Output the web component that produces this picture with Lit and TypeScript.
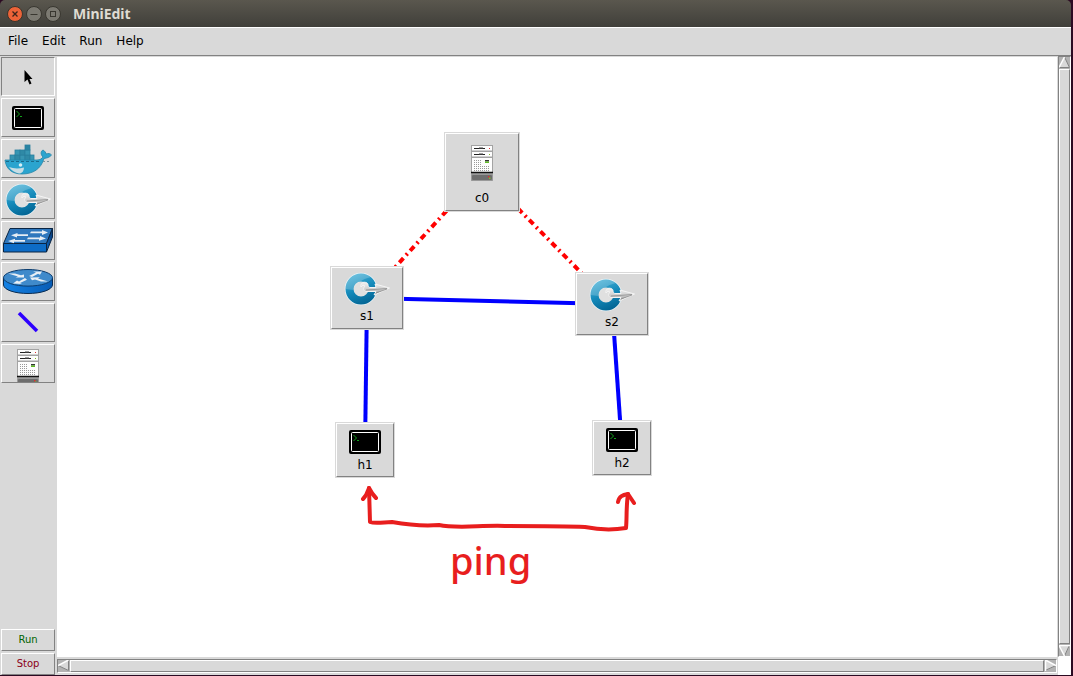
import { LitElement, html, css, svg } from "lit";
import { customElement, property, state } from "lit/decorators.js";

type IconName = "select" | "host" | "docker" | "ovs" | "switch" | "router" | "link" | "controller";

const ICONS: Record<IconName, { w: number; h: number; art: unknown }> = {
  select: {
    w: 10, h: 16,
    art: svg`<path d="M1.500 1V13L4.500 10.500L6.500 15.500L8.500 14.500L6.500 10H9.500Z" fill="#000"/>`,
  },
  host: {
    w: 32, h: 24,
    art: svg`
      <rect width="32" height="24" rx="2" fill="#000"/>
      <rect x="2.500" y="2.500" width="27" height="19" rx="1" fill="#000" stroke="#fff"/>
      <path d="M4.500 5L7.500 8L4.500 11M8 10.500H10" fill="none" stroke="#11a31b"/>`,
  },
  docker: {
    w: 48, h: 32,
    art: svg`
      <g stroke="#2a7f9e" stroke-width=".8">
        <rect x="6" y="12" width="5" height="5.500" fill="#3795b2"/>
        <rect x="11" y="12" width="5" height="5.500" fill="#2f89a6"/>
        <rect x="16" y="12" width="5" height="5.500" fill="#3795b2"/>
        <rect x="21" y="12" width="5" height="5.500" fill="#2f89a6"/>
        <rect x="26" y="12" width="4" height="5.500" fill="#3795b2"/>
        <rect x="11" y="7" width="5" height="5" fill="#3795b2"/>
        <rect x="16" y="7" width="5" height="5" fill="#2f89a6"/>
        <rect x="21" y="7" width="5" height="5" fill="#3795b2"/>
        <rect x="21" y="2" width="5" height="5" fill="#2a84a3"/>
      </g>
      <path d="M1 17H33C36 17 38 15.500 39 14C36 11 37 8 39 7C41 8 42 10 42 11C44 10 46.500 10.500 47.500 12C45.500 14.500 43 15 40 15.500C37 26 29 31 18 31C8 31 2 26 1 17Z" fill="#2ba4cf" stroke="#2585a8" stroke-width=".8"/>
      <path d="M5 24C9 25.500 14 26 20 24.500C20 28 18 30 16 30.500C11 30 7 27 5 24Z" fill="#c9dde4"/>
      <path d="M2 18.500H37" stroke="#1a6a8a" stroke-dasharray="3 2"/>
      <path d="M39 18.500H45" stroke="#7a949c" stroke-dasharray="2 2"/>
      <circle cx="16.500" cy="22" r="1.800" fill="#d6f0f7"/>`,
  },
  ovs: {
    w: 46, h: 34,
    art: svg`
      <defs>
        <linearGradient id="ring" gradientUnits="userSpaceOnUse" x1="10" y1="2" x2="22" y2="32">
          <stop offset="0" stop-color="#45b0d6"/><stop offset=".5" stop-color="#1489b9"/><stop offset="1" stop-color="#026493"/>
        </linearGradient>
        <linearGradient id="steel" x1="0" y1="0" x2="0" y2="1">
          <stop offset="0" stop-color="#f2f2f2"/><stop offset=".55" stop-color="#cfcfcf"/><stop offset="1" stop-color="#8c8c8c"/>
        </linearGradient>
      </defs>
      <circle cx="17" cy="17" r="11.500" fill="none" stroke="#edf5f8" stroke-width="9.500"/>
      <circle cx="17" cy="17" r="11.500" fill="#e0e0e0" stroke="url(#ring)" stroke-width="8"/>
      <path d="M1.500 17A15.500 15.500 0 0 1 17 1.500C21 1.500 25 3 27 5C18 7 11 12 9 18Z" fill="#fff" opacity=".2"/>
      <path d="M17 15C16 11 20 9 23 11C25 12 23 15 26 15.500H32L31 12L45.500 16L30 23L32 19.500H23C19 19.500 19 16 21 14C20 13 18 13 17 15Z" fill="url(#steel)" stroke="#f4f4f4"/>
      <path d="M22 18L30 17.500L43 16.500M32 21L43 17" fill="none" stroke="#8d8d8d" stroke-width=".8"/>`,
  },
  switch: {
    w: 50, h: 25,
    art: svg`
      <defs><linearGradient id="side"><stop stop-color="#0b62b8"/><stop offset="1" stop-color="#083c7c"/></linearGradient></defs>
      <path d="M.5 15.500L7 .5H49.500L43.500 15.500Z" fill="#2e77bd" stroke="#0a2543"/>
      <path d="M.5 15.500H43.500V24H.5Z" fill="#0d6cc6" stroke="#0a2543"/>
      <path d="M43.500 15.500L49.500 .5V9L43.500 24Z" fill="url(#side)" stroke="#0a2543"/>
      <g fill="#e6edf4">
        <path d="M28 3.500H39V2L45 4.500L39 7V5.300H27Z"/>
        <path d="M25 6.200V8H14V9.500L8 7.200L14.500 5V6.200Z"/>
        <path d="M25 9.500H37V8L43 10.400L36 12.800V11.200H24Z"/>
        <path d="M22 12V13.800H11V15.200L5 13L12 10.800V12Z"/>
      </g>`,
  },
  router: {
    w: 50, h: 25,
    art: svg`
      <defs><linearGradient id="drum"><stop stop-color="#1583e6"/><stop offset="1" stop-color="#075cb5"/></linearGradient></defs>
      <path d="M.5 9V16C1 21 12 24.500 25 24.500S49 21 49.500 16V9Z" fill="url(#drum)" stroke="#0b2c50"/>
      <ellipse cx="25" cy="8.800" rx="24.500" ry="8.300" fill="#3f8acb" stroke="#0b3c6e"/>
      <g fill="#e9eff5">
        <path d="M5 4.500H12L18 6.200L21 5.500L21 8.500H12.500L15 7.400Z"/>
        <path d="M26 7L33 3.500L30 2.500H39L37 5.800L35 4.700L29 8Z"/>
        <path d="M22 9L24 10.700L17 14L19 15L10 14.500L14 11.500L16 12.500Z"/>
        <path d="M45 12.500H38L32 10.500L29 11.200L27 8.500L37 8.300L35 9.500Z"/>
      </g>`,
  },
  link: {
    w: 22, h: 22,
    art: svg`<path d="M2 1L20 19" stroke="#2d00ff" stroke-width="3.500"/>`,
  },
  controller: {
    w: 22, h: 36,
    art: svg`
      <rect width="22" height="36" fill="#a3a3a3"/>
      <path d="M1 1H21V5.500H1ZM1 7H21V11.500H1ZM1 13H21V27H1Z" fill="#fdfdfd"/>
      <path d="M3 3.500H14M3 9.500H14" stroke="#222" stroke-width="1.200"/>
      <path d="M8 2.800H12M8 8.800H12" stroke="#777"/>
      <rect x="18" y="3" width="1" height="1" fill="#e03030"/><rect x="18" y="9" width="1" height="1" fill="#7fbf20"/>
      <rect x="14" y="15" width="4" height="1.500" fill="#333"/><rect x="14" y="16.500" width="4" height="1.500" fill="#5ebc22"/>
      <path d="M3 15.500H11M3 17.500H11M3 19.500H11M3 21.500H19M3 23.500H19M3 25.500H19" stroke="#999" stroke-dasharray="1 1"/>
      <path d="M0 27.500H22" stroke="#111" stroke-width="1.500"/>
      <rect x=".5" y="29.500" width="21" height="6" rx="1.500" fill="#6d6d6d" stroke="#999"/>
      <rect x="17" y="31" width="1.500" height="1.500" fill="#e03030"/><rect x="18" y="32.500" width="1.500" height="1.500" fill="#7fbf20"/>`,
  },
};

@customElement("net-icon")
class NetIcon extends LitElement {
  @property() name: IconName = "host";
  static styles = css`
    :host { display: block; flex: none; }
    svg { display: block; }
  `;
  render() {
    const { w, h, art } = ICONS[this.name];
    return html`<svg width=${w} height=${h} viewBox="0 0 ${w} ${h}" aria-hidden="true">${art}</svg>`;
  }
}

interface NetNode { id: string; icon: IconName; x: number; y: number; w: number; h: number; }

const TOOLS: { icon: IconName; label: string }[] = [
  { icon: "select", label: "Select" },
  { icon: "host", label: "Host" },
  { icon: "docker", label: "Docker" },
  { icon: "ovs", label: "Switch" },
  { icon: "switch", label: "Legacy switch" },
  { icon: "router", label: "Legacy router" },
  { icon: "link", label: "Link" },
  { icon: "controller", label: "Controller" },
];

const NODES: NetNode[] = [
  { id: "c0", icon: "controller", x: 387, y: 75, w: 76, h: 80 },
  { id: "s1", icon: "ovs", x: 273, y: 209, w: 74, h: 64 },
  { id: "s2", icon: "ovs", x: 518, y: 215, w: 74, h: 64 },
  { id: "h1", icon: "host", x: 278, y: 365, w: 60, h: 56 },
  { id: "h2", icon: "host", x: 535, y: 363, w: 60, h: 56 },
];

const LINKS = [
  { from: "s1", to: "c0", control: true },
  { from: "s2", to: "c0", control: true },
  { from: "s1", to: "s2", control: false },
  { from: "s1", to: "h1", control: false },
  { from: "s2", to: "h2", control: false },
];

@customElement("net-canvas")
class NetCanvas extends LitElement {
  static styles = css`
    :host { display: block; position: relative; overflow: hidden; background: #fff; }
    .links { position: absolute; inset: 0; width: 100%; height: 100%; }
    .wire { stroke: #00f; stroke-width: 4; }
    .control { stroke: #f00; stroke-width: 4; stroke-dasharray: 6 4 2 4; }
    .ink { fill: none; stroke: #e81e1e; stroke-width: 4; stroke-linecap: round; stroke-linejoin: round; }
    .note { position: absolute; left: 393px; top: 477px; font: 500 38px/52px "Noto Sans", sans-serif; color: #e81e1e; }
    .node {
      position: absolute; box-sizing: border-box; display: flex; flex-direction: column;
      align-items: center; justify-content: flex-start; gap: 3px; padding: 6px 0 0;
      color: #000; background: #d9d9d9; font: 12px/16px "DejaVu Sans", sans-serif;
      border: 1px solid; border-color: #fff #828282 #828282 #fff; outline: 1px solid #d9d9d9;
    }
    .c0 { gap: 9px; padding-top: 11px; }
    .s1, .s2 { gap: 2px; padding-top: 4px; }
  `;
  private center(id: string) {
    const n = NODES.find((node) => node.id === id)!;
    return { x: n.x + n.w / 2, y: n.y + n.h / 2 };
  }
  render() {
    return html`
      <svg class="links" aria-hidden="true">
        ${LINKS.map((l) => {
          const a = this.center(l.from);
          const b = this.center(l.to);
          return svg`<line class=${l.control ? "control" : "wire"} x1=${a.x} y1=${a.y} x2=${b.x} y2=${b.y} />`;
        })}
        <path class="ink" d="M312 431L313 465C318 467 328 465 335 465C352 468 369 469 382 468C400 472 424 468 448 469C475 469 508 469 528 470C543 473 557 473 569 471C570 461 569 450 571 437"/>
        <path class="ink" d="M306 442C310 438 311 434 312 431C314 435 316 438 319 441M561 445C562 439 566 438 571 437C573 440 575 443 577 446"/>
      </svg>
      ${NODES.map((n) => html`
        <button class="node ${n.id}" style="left:${n.x + 1}px;top:${n.y + 1}px;width:${n.w - 2}px;height:${n.h - 2}px">
          <net-icon name=${n.icon}></net-icon><span>${n.id}</span>
        </button>`)}
      <span class="note">ping</span>
    `;
  }
}

@customElement("scroll-bar")
class ScrollBar extends LitElement {
  @property({ reflect: true }) orientation: "vertical" | "horizontal" = "vertical";
  static styles = css`
    :host { display: flex; box-sizing: border-box; background: #b3b3b3; border: 1px solid; border-color: #828282 #fff #fff #828282; }
    :host([orientation="vertical"]) { flex-direction: column; }
    .arrow { display: block; flex: none; padding: 0; border: 0; background: none; width: 11px; height: 11px; }
    .arrow svg { display: block; }
    .thumb { flex: 1; margin: 1px 0; background: #d9d9d9; border: 1px solid; border-color: #fff #828282 #828282 #fff; }
    :host([orientation="horizontal"]) .thumb { margin: 0 1px; }
  `;
  private arrow(label: string, shape: string, light: string, dark: string) {
    return html`<button class="arrow" aria-label=${label}>
      <svg width="11" height="11" viewBox="0 0 11 11"><path d=${shape} fill="#d9d9d9"/><path d=${dark} fill="none" stroke="#828282"/><path d=${light} fill="none" stroke="#fff" stroke-width="1.500"/></svg>
    </button>`;
  }
  render() {
    const v = this.orientation === "vertical";
    return html`
      ${v
        ? this.arrow("Scroll up", "M5.500 0L11 11H0Z", "M0 10.500L5.500 0", "M5.500 0L10.500 10.500H0")
        : this.arrow("Scroll left", "M0 5.500L11 0V11Z", "M0 5.500L10.500 0", "M10.500 0V10.500L0 5.500")}
      <div class="thumb"></div>
      ${v
        ? this.arrow("Scroll down", "M0 0H11L5.500 11Z", "M11 .5H0L5.500 11", "M10.500 0L5.500 11")
        : this.arrow("Scroll right", "M0 0L11 5.500L0 11Z", "M.5 11V0L11 5.500", "M0 10.500L11 5.500")}
    `;
  }
}

@customElement("app-root")
class AppRoot extends LitElement {
  @state() private tool: IconName = "select";
  static styles = css`
    :host {
      display: flex; flex-direction: column; box-sizing: border-box; height: 100vh;
      padding: 0 2px 1px 0; background: #2b0a22; font: 12px/16px "DejaVu Sans", sans-serif; color: #000;
    }
    .title {
      display: flex; align-items: center; gap: 3px; flex: none; height: 27px; padding-left: 7px;
      background: linear-gradient(#5a574e, #403f3a); border-radius: 5px 5px 0 0;
    }
    .win { display: block; width: 16px; height: 16px; padding: 0; border: 0; background: none; }
    .win svg { display: block; }
    h1 { margin: 0 0 0 9px; font: bold 14px/20px "Noto Sans", sans-serif; color: #dfdbd2; }
    .menu {
      display: flex; gap: 2px; flex: none; box-sizing: border-box; height: 29px; padding: 0 2px 2px; background: #d9d9d9;
      border-top: 1px solid #fff; border-bottom: 1px solid #828282;
    }
    .menu button { padding: 0 6px; border: 0; background: none; font: inherit; color: inherit; }
    .body { flex: 1; min-height: 0; display: grid; grid-template: minmax(0, 1fr) 18px / 57px minmax(0, 1fr) 14px; background: #d9d9d9; }
    .tools { grid-row: 1 / 3; display: flex; flex-direction: column; gap: 2px; padding: 1px 2px 0 1px; }
    .tool, .action {
      display: flex; align-items: center; justify-content: center; flex: none; padding: 0; overflow: hidden;
      box-sizing: border-box; background: #d9d9d9; border: 1px solid; border-color: #fff #828282 #828282 #fff;
    }
    .tool { height: 39px; }
    .tool.on { border-color: #828282 #fff #fff #828282; }
    .tool.controller { align-items: flex-start; padding-top: 4px; }
    .action { height: 22px; font: 10px/12px "DejaVu Sans", sans-serif; }
    .run { margin-top: auto; color: #006400; }
    .stop { color: #8b0016; }
    net-canvas { border-top: 1px solid #d9d9d9; }
    .vbar { margin-left: 1px; }
    .hbar { margin: 2px 0; }
    .corner { background: #fff; margin-left: 1px; }
  `;
  render() {
    return html`
      <header class="title">
        <button class="win" aria-label="Close"><svg width="16" height="16"><circle cx="8" cy="8" r="7.500" fill="#ec6338" stroke="#39342c"/><path d="M5.500 5.500L10.500 10.500M10.500 5.500L5.500 10.500" stroke="#3b241b" stroke-width="1.300"/></svg></button>
        <button class="win" aria-label="Minimize"><svg width="16" height="16"><circle cx="8" cy="8" r="7.500" fill="#7c7a72" stroke="#393730"/><path d="M4.500 8.500H11.500" stroke="#393730"/></svg></button>
        <button class="win" aria-label="Maximize"><svg width="16" height="16"><circle cx="8" cy="8" r="7.500" fill="#7c7a72" stroke="#393730"/><rect x="5.500" y="5.500" width="5" height="5" fill="none" stroke="#393730"/></svg></button>
        <h1>MiniEdit</h1>
      </header>
      <nav class="menu">${["File", "Edit", "Run", "Help"].map((m) => html`<button>${m}</button>`)}</nav>
      <main class="body">
        <div class="tools">
          ${TOOLS.map((t) => html`
            <button class="tool ${t.icon} ${this.tool === t.icon ? "on" : ""}" aria-label=${t.label} @click=${() => (this.tool = t.icon)}>
              <net-icon name=${t.icon}></net-icon>
            </button>`)}
          <button class="action run">Run</button>
          <button class="action stop">Stop</button>
        </div>
        <net-canvas></net-canvas>
        <scroll-bar class="vbar" orientation="vertical"></scroll-bar>
        <scroll-bar class="hbar" orientation="horizontal"></scroll-bar>
        <div class="corner"></div>
      </main>
    `;
  }
}
